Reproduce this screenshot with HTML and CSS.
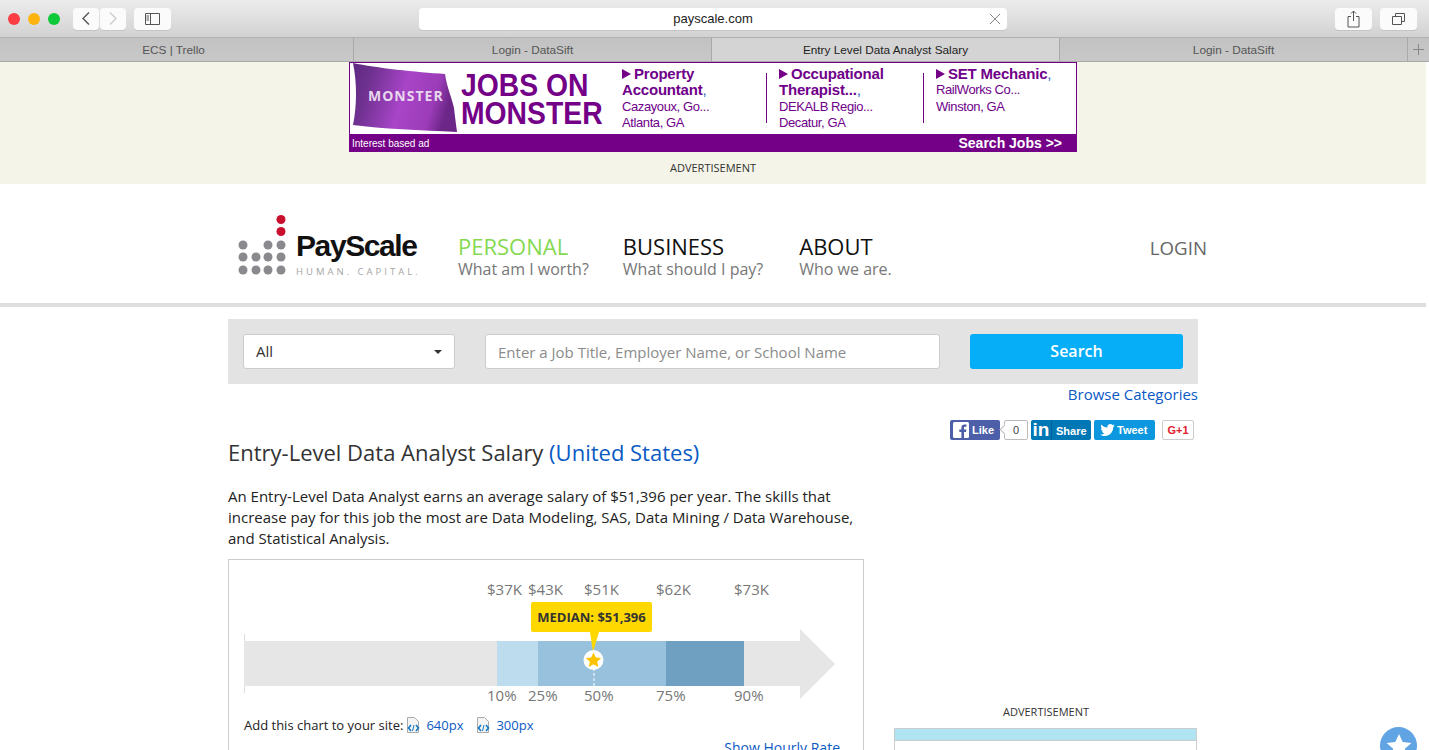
FILE: index.html
```html
<!DOCTYPE html>
<html lang="en">

<head>
    <meta charset="UTF-8">
    <title>Entry-Level Data Analyst Salary</title>
    <link rel="stylesheet" href="styles.css">
</head>

<body>
    <div class="toolbar">
        <div class="lights">
            <span class="light red"></span>
            <span class="light yellow"></span>
            <span class="light green"></span>
        </div>
        <div class="navBtns">
            <div class="btn btnNav">
                <svg width="10" height="15" viewBox="0 0 10 15"><path d="M8 1.500 2 7.500l6 6" fill="none" stroke="#555" stroke-width="1.400"/></svg>
            </div>
            <div class="btn btnNav">
                <svg width="10" height="15" viewBox="0 0 10 15"><path d="M2 1.500l6 6-6 6" fill="none" stroke="#ccc" stroke-width="1.400"/></svg>
            </div>
        </div>
        <div class="btn btnWide sidebarBtn">
            <svg width="15" height="12" viewBox="0 0 15 12"><path d="M.5.5h14v11H.5zM5.500.5v11M1.500 3h2.500M1.500 5h2.500M1.500 7h2.500" fill="none" stroke="#555"/></svg>
        </div>
        <div class="urlBar">
            <span class="urlText">payscale.com</span>
            <svg class="urlClose" width="12" height="12" viewBox="0 0 12 12"><path d="M1 1l10 10M11 1 1 11" stroke="#888" stroke-width="1"/></svg>
        </div>
        <div class="btn btnWide">
            <svg width="13" height="18" viewBox="0 0 13 18"><path d="M4 6.500H1v10.500h11V6.500H9M6.500 11V1M4 3.500 6.500 1 9 3.500" fill="none" stroke="#555"/></svg>
        </div>
        <div class="btn btnWide">
            <svg width="13" height="12" viewBox="0 0 13 12"><path d="M.5 3.500h9v8h-9zM3.500 3.500V.5h9v8h-3" fill="none" stroke="#555"/></svg>
        </div>
    </div>

    <div class="tabs">
        <div class="tab tabFirst">ECS | Trello</div>
        <div class="tab tabSecond">Login - DataSift</div>
        <div class="tab tabActive">Entry Level Data Analyst Salary</div>
        <div class="tab tabFourth">Login - DataSift</div>
        <div class="tabAdd">
            <svg width="11" height="11" viewBox="0 0 11 11"><path d="M5.500 0v11M0 5.500h11" stroke="#888"/></svg>
        </div>
    </div>

    <div class="page">
        <div class="adBar">
            <div class="banner">
                <div class="bannerTop">
                    <svg class="flag" width="107" height="70" viewBox="0 0 107 70">
                        <defs>
                            <linearGradient id="flagFill" x1="0" y1="0" x2="1" y2="0.2">
                                <stop offset="0" stop-color="#5d2a80"/>
                                <stop offset="0.2" stop-color="#6f3190"/>
                                <stop offset="0.55" stop-color="#a845c8"/>
                                <stop offset="0.85" stop-color="#9c3cb8"/>
                                <stop offset="1" stop-color="#6c2688"/>
                            </linearGradient>
                        </defs>
                        <path d="M2 0C25 5 65 9 94 11c2 14 7 24 9 34 1 9 2 16 3 24C70 67 30 66 2 62 6 42 6 20 2 0z" fill="url(#flagFill)"/>
                        <text x="17" y="38" class="flagText">MONSTER</text>
                    </svg>
                    <div class="bannerTitle">JOBS ON<br>MONSTER</div>
                    <div class="job jobFirst">
                        <div class="jobTitle"><span class="jobArrow"></span>Property Accountant<span class="jobComma">,</span></div>
                        <div>Cazayoux, Go...</div>
                        <div>Atlanta, GA</div>
                    </div>
                    <div class="job jobLine">
                        <div class="jobTitle"><span class="jobArrow"></span>Occupational Therapist...<span class="jobComma">,</span></div>
                        <div>DEKALB Regio...</div>
                        <div>Decatur, GA</div>
                    </div>
                    <div class="job jobLine jobLast">
                        <div class="jobTitle"><span class="jobArrow"></span>SET Mechanic<span class="jobComma">,</span></div>
                        <div>RailWorks Co...</div>
                        <div>Winston, GA</div>
                    </div>
                </div>
                <div class="bannerFoot">
                    <span class="interest">Interest based ad</span>
                    <span class="searchJobs">Search Jobs &gt;&gt;</span>
                </div>
            </div>
            <div class="adLabel">ADVERTISEMENT</div>
        </div>

        <div class="header">
            <div class="logo">
                <svg width="58" height="64" viewBox="0 0 58 64">
                    <g fill="#8a8a8e">
                        <circle cx="5" cy="30" r="4.500"/><circle cx="30" cy="30" r="4.500"/><circle cx="43" cy="30" r="4.500"/>
                        <circle cx="5" cy="42" r="4.500"/><circle cx="18" cy="42" r="4.500"/><circle cx="30" cy="42" r="4.500"/><circle cx="43" cy="42" r="4.500"/>
                        <circle cx="5" cy="55" r="4.500"/><circle cx="18" cy="55" r="4.500"/><circle cx="30" cy="55" r="4.500"/><circle cx="43" cy="55" r="4.500"/>
                    </g>
                    <circle cx="43" cy="4.500" r="4.500" fill="#c8102e"/>
                    <circle cx="43" cy="16.500" r="4.500" fill="#c8102e"/>
                </svg>
                <div class="logoText">
                    <div class="logoName">PayScale</div>
                    <div class="logoTag">HUMAN. CAPITAL.</div>
                </div>
            </div>
            <div class="nav">
                <div class="navItem navPersonal">
                    <div class="navTitle">PERSONAL</div>
                    <div class="navSub">What am I worth?</div>
                </div>
                <div class="navItem">
                    <div class="navTitle">BUSINESS</div>
                    <div class="navSub">What should I pay?</div>
                </div>
                <div class="navItem navAbout">
                    <div class="navTitle">ABOUT</div>
                    <div class="navSub">Who we are.</div>
                </div>
            </div>
            <div class="login">LOGIN</div>
        </div>

        <div class="content">
            <div class="searchBar">
                <div class="selectBox">All<span class="caret"></span></div>
                <div class="searchInput">Enter a Job Title, Employer Name, or School Name</div>
                <div class="searchBtn">Search</div>
            </div>
            <div class="browse"><a href="#">Browse Categories</a></div>

            <div class="columns">
                <div class="leftCol">
                    <h1>Entry-Level Data Analyst Salary <a href="#">(United States)</a></h1>
                    <p class="intro">An Entry-Level Data Analyst earns an average salary of $51,396 per year. The skills that increase pay for this job the most are Data Modeling, SAS, Data Mining / Data Warehouse, and Statistical Analysis.</p>

                    <div class="chartBox">
                        <div class="chart">
                            <span class="chartVal" style="left:243px">$37K</span>
                            <span class="chartVal" style="left:284px">$43K</span>
                            <span class="chartVal" style="left:340px">$51K</span>
                            <span class="chartVal" style="left:412px">$62K</span>
                            <span class="chartVal" style="left:490px">$73K</span>

                            <div class="tick"></div>
                            <div class="bar">
                                <div class="seg segGray" style="width:253px"></div>
                                <div class="seg segLight" style="width:41px"></div>
                                <div class="seg segMid" style="width:128px"></div>
                                <div class="seg segDark" style="width:78px"></div>
                                <div class="seg segGray" style="width:56px"></div>
                            </div>
                            <div class="arrowHead"></div>

                            <div class="median">MEDIAN: $51,396</div>
                            <svg class="medianMark" width="24" height="56" viewBox="0 0 24 56">
                                <path d="M9 0h9l-6 20z" fill="#ffd800"/>
                                <path d="M13 36v20" stroke="#fff" stroke-dasharray="3 2"/>
                                <circle cx="12.500" cy="28" r="10" fill="#fff"/>
                                <path d="M12.500 20.500l2.300 5 5.400.6-4 3.600 1.100 5.300-4.800-2.700-4.800 2.700 1.100-5.300-4-3.600 5.400-.6z" fill="#fcc400"/>
                            </svg>

                            <span class="chartPct" style="left:243px">10%</span>
                            <span class="chartPct" style="left:284px">25%</span>
                            <span class="chartPct" style="left:340px">50%</span>
                            <span class="chartPct" style="left:412px">75%</span>
                            <span class="chartPct" style="left:490px">90%</span>
                        </div>
                        <div class="addChart">
                            <span>Add this chart to your site:</span>
                            <svg class="embedIcon" width="16" height="17" viewBox="0 0 16 17"><path d="M2.500.5h7l4 4v11h-11z" fill="#f4f4f4" stroke="#aaa"/><path d="M6 8 3.500 11 6 14M11 8l2.500 3-2.500 3" fill="none" stroke="#1478c8" stroke-width="1.600"/><path d="M9 8l-1.500 6" stroke="#1478c8"/></svg>
                            <a href="#" class="sizeLink">640px</a>
                            <svg class="embedIcon embedSecond" width="16" height="17" viewBox="0 0 16 17"><path d="M2.500.5h7l4 4v11h-11z" fill="#f4f4f4" stroke="#aaa"/><path d="M6 8 3.500 11 6 14M11 8l2.500 3-2.500 3" fill="none" stroke="#1478c8" stroke-width="1.600"/><path d="M9 8l-1.500 6" stroke="#1478c8"/></svg>
                            <a href="#" class="sizeLink">300px</a>
                        </div>
                        <div class="hourly"><a href="#">Show Hourly Rate</a></div>
                    </div>
                </div>

                <div class="rightCol">
                    <div class="social">
                        <div class="share shareFb">
                            <svg width="16" height="16" viewBox="0 0 16 16"><rect width="16" height="16" rx="1.500" fill="#fff"/><path d="M11 16V10h2l.4-2.500H11V6c0-.8.3-1.200 1.200-1.200h1.300V2.600C13 2.500 12.300 2.500 11.500 2.500 9.600 2.500 8.400 3.600 8.400 5.600v1.900H6.300V10h2.100v6z" fill="#4c5fa8"/></svg>
                            <span>Like</span>
                        </div>
                        <div class="shareCount">0</div>
                        <div class="share shareIn">
                            <span class="inMark">in</span>
                            <span class="inLabel">Share</span>
                        </div>
                        <div class="share shareTw">
                            <svg width="15" height="12" viewBox="0 0 24 20"><path d="M24 2.400c-.9.400-1.800.7-2.800.8 1-.6 1.800-1.600 2.200-2.700-.9.600-2 1-3.100 1.200C19.400.7 18.100 0 16.700 0c-2.700 0-4.900 2.200-4.900 4.900 0 .4 0 .8.100 1.100C7.800 5.800 4.200 3.900 1.700.9 1.200 1.600 1 2.500 1 3.400c0 1.700.9 3.200 2.200 4.100-.8 0-1.600-.2-2.200-.6v.1c0 2.400 1.700 4.400 3.900 4.800-.4.100-.8.200-1.300.2-.3 0-.6 0-.9-.1.600 2 2.400 3.400 4.600 3.400-1.700 1.300-3.800 2.100-6.100 2.100-.4 0-.8 0-1.200-.1C2.200 19.200 4.800 20 7.500 20c9.100 0 14-7.500 14-14v-.6c1-.7 1.800-1.600 2.500-3z" fill="#fff"/></svg>
                            <span>Tweet</span>
                        </div>
                        <div class="shareGp">G+1</div>
                    </div>

                    <div class="sideAd">
                        <div class="sideLabel">ADVERTISEMENT</div>
                        <div class="sideBox">
                            <div class="sideBand"></div>
                        </div>
                    </div>
                </div>
            </div>
        </div>
    </div>

    <div class="favBubble">
        <svg width="26" height="26" viewBox="0 0 26 26"><path d="M13 1l3.700 8 8.700 1-6.500 5.800 1.800 8.600L13 20l-7.700 4.400 1.800-8.600L.6 10l8.700-1z" fill="#fff"/></svg>
    </div>
</body>

</html>
```

FILE: styles.css
```css
html,
body {
    height: 750px;
    overflow: hidden;
}

body {
    position: relative;
    margin: 0;
    padding: 0;
    background-color: white;
    font-family: "Open Sans", sans-serif;
    color: #333;
}

a {
    color: #0b5ac4;
    text-decoration: none;
}

/* browser window */
.toolbar {
    display: flex;
    align-items: center;
    height: 38px;
    box-sizing: border-box;
    padding: 0 12px 0 8px;
    background: linear-gradient(#ececec, #d2d2d2);
    border-bottom: 1px solid #b1b1b1;
}

.lights {
    display: flex;
    gap: 8px;
    width: 65px;
}

.light {
    width: 12px;
    height: 12px;
    border-radius: 50%;
}

.red {
    background-color: #fc3d43;
}

.yellow {
    background-color: #fdb40f;
}

.green {
    background-color: #0ec93a;
}

.navBtns {
    display: flex;
    gap: 1px;
}

.btn {
    display: flex;
    align-items: center;
    justify-content: center;
    height: 22px;
    background-color: #fbfbfb;
    border-radius: 4px;
    box-shadow: 0 1px 0 #c4c4c4;
}

.btnNav {
    width: 26px;
}

.btnWide {
    width: 37px;
}

.sidebarBtn {
    margin-left: 8px;
}

.urlBar {
    position: relative;
    width: 588px;
    height: 22px;
    margin: 0 328px 0 248px;
    background-color: white;
    border-radius: 4px;
    box-shadow: 0 1px 0 #c4c4c4;
    font: 13px/22px "Liberation Sans", sans-serif;
    text-align: center;
    color: #222;
}

.urlClose {
    position: absolute;
    right: 6px;
    top: 5px;
}

.toolbar .btnWide:last-child {
    margin-left: 8px;
}

.tabs {
    display: flex;
    height: 24px;
    box-sizing: border-box;
    background: linear-gradient(#c2c2c2, #c8c8c8);
    border-bottom: 1px solid #a9a9a9;
    font: 11.800px/25px "Liberation Sans", sans-serif;
    color: #555;
}

.tab {
    box-sizing: border-box;
    border-right: 1px solid #a9a9a9;
    text-align: center;
}

.tabFirst {
    width: 354px;
    padding-right: 6px;
}

.tabSecond {
    width: 358px;
}

.tabActive {
    width: 348px;
    background: #d4d4d4;
    color: #222;
}

.tabFourth {
    width: 348px;
}

.tabAdd {
    display: flex;
    flex: 1;
    align-items: center;
    justify-content: center;
}

/* page */
.page {
    width: 1426px;
}

.adBar {
    height: 122px;
    background-color: #f4f4e8;
}

.banner {
    display: flex;
    flex-direction: column;
    box-sizing: border-box;
    width: 728px;
    height: 90px;
    margin: 0 auto;
    background-color: white;
    border: 1px solid #730087;
    font-family: "Liberation Sans", sans-serif;
    color: #6f008a;
}

.bannerTop {
    display: flex;
    flex: 1;
    min-height: 0;
}

.flag {
    flex: none;
    margin: 0 0 0 1px;
}

.flagText {
    font: bold 14px "Open Sans", sans-serif;
    letter-spacing: 1px;
    fill: #e8d8ee;
}

.bannerTitle {
    flex: none;
    width: 160px;
    margin: 8px 0 0 3px;
    font-size: 32px;
    font-weight: bold;
    line-height: 28px;
    color: #730087;
    transform: scaleX(0.885);
    transform-origin: left top;
    white-space: nowrap;
}

.job {
    box-sizing: border-box;
    width: 157px;
    padding-top: 3px;
    font-size: 13px;
    line-height: 16.300px;
    letter-spacing: -0.400px;
}

.jobFirst {
    width: 144px;
    margin-left: 1px;
    padding-right: 30px;
}

.jobLine {
    position: relative;
    padding-left: 13px;
    padding-right: 30px;
}

.jobLast {
    width: 140px;
    padding-right: 0;
}

.jobLine::before {
    content: "";
    position: absolute;
    left: 0;
    top: 10px;
    height: 50px;
    border-left: 1px solid #730087;
}

.jobTitle {
    font-size: 15px;
    font-weight: bold;
    letter-spacing: -0.200px;
}

.jobArrow {
    display: inline-block;
    margin-right: 3px;
    border-left: 9px solid #730087;
    border-top: 5px solid transparent;
    border-bottom: 5px solid transparent;
}

.jobComma {
    font-weight: normal;
    color: #1c5fbf;
}

.bannerFoot {
    display: flex;
    justify-content: space-between;
    align-items: center;
    height: 17px;
    padding: 0 14px 0 2px;
    background-color: #730087;
    color: white;
}

.interest {
    font-size: 10px;
    padding-top: 2px;
}

.searchJobs {
    font-size: 14px;
    font-weight: bold;
}

.adLabel {
    margin-top: 8px;
    font-size: 11px;
    line-height: 15px;
    text-align: center;
}

.header {
    display: flex;
    align-items: center;
    box-sizing: border-box;
    width: 969px;
    height: 119px;
    margin-left: 238px;
    color: #666;
}

.logo {
    display: flex;
    width: 220px;
    margin-top: 6px;
}

.logoText {
    width: 124px;
    margin-top: 12px;
}

.logoName {
    font: bold 30px/38px "Liberation Sans", sans-serif;
    letter-spacing: -1.400px;
    color: #111;
}

.logoTag {
    font: 9.500px/14px "Open Sans", sans-serif;
    letter-spacing: 3px;
    white-space: nowrap;
    color: #a5a5a5;
}

.nav {
    display: flex;
    gap: 34px;
    margin-top: 22px;
}

.navAbout {
    margin-left: 2px;
}

.navTitle {
    font-size: 22px;
    line-height: 28px;
    color: #111;
}

.navPersonal .navTitle {
    color: #85d94f;
}

.navSub {
    font-size: 16px;
    line-height: 18px;
    color: #777;
}

.login {
    margin: 8px 0 0 auto;
    font-size: 18.700px;
    color: #666;
}

.content {
    border-top: 4px solid #dedede;
    padding: 12px 0 0 228px;
}

.searchBar {
    display: flex;
    align-items: center;
    box-sizing: border-box;
    width: 970px;
    height: 65px;
    padding: 0 15px;
    background-color: #e3e3e3;
    font-size: 15px;
}

.selectBox {
    position: relative;
    box-sizing: border-box;
    width: 212px;
    height: 35px;
    padding-left: 12px;
    background-color: white;
    border: 1px solid #ccc;
    border-radius: 3px;
    line-height: 33px;
}

.caret {
    position: absolute;
    right: 12px;
    top: 15px;
    border-top: 4px solid #333;
    border-left: 4px solid transparent;
    border-right: 4px solid transparent;
}

.searchInput {
    box-sizing: border-box;
    width: 455px;
    height: 35px;
    margin-left: 30px;
    padding-left: 12px;
    background-color: white;
    border: 1px solid #ccc;
    border-radius: 3px;
    line-height: 35px;
    color: #8b8b8b;
}

.searchBtn {
    width: 213px;
    height: 35px;
    margin-left: 30px;
    background-color: #05aef7;
    border-radius: 3px;
    font-size: 16px;
    font-weight: 600;
    line-height: 35px;
    text-align: center;
    color: white;
}

.browse {
    width: 970px;
    font-size: 15px;
    line-height: 21px;
    text-align: right;
}

.columns {
    display: flex;
    gap: 30px;
}

.leftCol {
    width: 636px;
}

h1 {
    margin: 31px 0 0;
    font-size: 22px;
    font-weight: 400;
    line-height: 32px;
}

.intro {
    margin: 18px 0 0;
    font-size: 15px;
    line-height: 21px;
    color: #222;
}

.chartBox {
    box-sizing: border-box;
    height: 300px;
    margin-top: 10px;
    padding: 0 15px;
    border: 1px solid #ccc;
}

.chart {
    position: relative;
    height: 150px;
}

.chartVal,
.chartPct {
    position: absolute;
    font-size: 15px;
    line-height: 20px;
    color: #777;
}

.chartVal {
    top: 19px;
}

.chartPct {
    top: 125px;
}

.tick {
    position: absolute;
    left: 0;
    top: 74px;
    height: 59px;
    border-left: 1px solid #ddd;
}

.bar {
    position: absolute;
    left: 0;
    top: 81px;
    display: flex;
    height: 45px;
}

.seg {
    height: 100%;
}

.segGray {
    background-color: #e6e6e6;
}

.segLight {
    background-color: #bddcee;
}

.segMid {
    background-color: #97c1dc;
}

.segDark {
    background-color: #70a0c1;
}

.arrowHead {
    position: absolute;
    left: 556px;
    top: 69px;
    border-left: 35px solid #e6e6e6;
    border-top: 35px solid transparent;
    border-bottom: 35px solid transparent;
}

.median {
    position: absolute;
    left: 287px;
    top: 42px;
    width: 121px;
    height: 30px;
    background-color: #ffd800;
    border-radius: 2px;
    font-size: 13px;
    font-weight: 700;
    line-height: 30px;
    text-align: center;
    color: #333;
}

.medianMark {
    position: absolute;
    left: 337px;
    top: 72px;
}

.addChart {
    display: flex;
    align-items: center;
    margin-top: 5px;
    font-size: 13px;
    line-height: 20px;
    color: #222;
}

.embedIcon {
    margin-left: 2px;
}

.sizeLink {
    margin-left: 5px;
}

.embedSecond {
    margin-left: 12px;
}

.hourly {
    margin-top: 3px;
    font-size: 14px;
    text-align: right;
    padding-right: 8px;
    line-height: 20px;
}

.rightCol {
    width: 304px;
}

.social {
    display: flex;
    align-items: flex-start;
    height: 20px;
    margin: 15px 0 0 56px;
    font: bold 11px/20px "Liberation Sans", sans-serif;
    color: white;
}

.share {
    display: flex;
    align-items: center;
    height: 20px;
    border-radius: 2px;
}

.shareFb {
    gap: 3px;
    width: 50px;
    padding-left: 3px;
    box-sizing: border-box;
    background-color: #4c5fa8;
}

.shareCount {
    position: relative;
    box-sizing: border-box;
    width: 24px;
    height: 20px;
    margin-left: 4px;
    background-color: white;
    border: 1px solid #bbb;
    border-radius: 2px;
    font-weight: normal;
    line-height: 18px;
    text-align: center;
    color: #444;
}

.shareCount::before {
    content: "";
    position: absolute;
    left: -4px;
    top: 5px;
    width: 6px;
    height: 6px;
    background-color: white;
    border-left: 1px solid #bbb;
    border-bottom: 1px solid #bbb;
    transform: rotate(45deg);
}

.shareIn {
    width: 60px;
    margin-left: 3px;
    background-color: #0077b5;
}

.inMark {
    width: 20px;
    border-right: 1px solid #00629a;
    font-size: 19px;
    line-height: 20px;
    text-align: center;
}

.inLabel {
    margin-left: 4px;
    padding-top: 1px;
}

.shareTw {
    gap: 2px;
    width: 61px;
    box-sizing: border-box;
    padding-left: 6px;
    margin-left: 3px;
    background-color: #0d97de;
}

.shareGp {
    box-sizing: border-box;
    width: 32px;
    height: 20px;
    margin-left: 7px;
    border: 1px solid #ccc;
    border-radius: 2px;
    line-height: 18px;
    text-align: center;
    color: #e0202c;
}

.sideAd {
    margin-top: 264px;
}

.sideLabel {
    font-size: 11px;
    line-height: 16px;
    text-align: center;
}

.sideBox {
    box-sizing: border-box;
    width: 303px;
    height: 100px;
    margin-top: 8px;
    border: 1px solid #ccc;
}

.sideBand {
    height: 11px;
    background-color: #b1e4f3;
    border-bottom: 1px solid #ccc;
}

.favBubble {
    position: absolute;
    left: 1380px;
    top: 727px;
    display: flex;
    align-items: center;
    justify-content: center;
    width: 37px;
    height: 37px;
    background-color: #60a4e4;
    border-radius: 50%;
}
```
